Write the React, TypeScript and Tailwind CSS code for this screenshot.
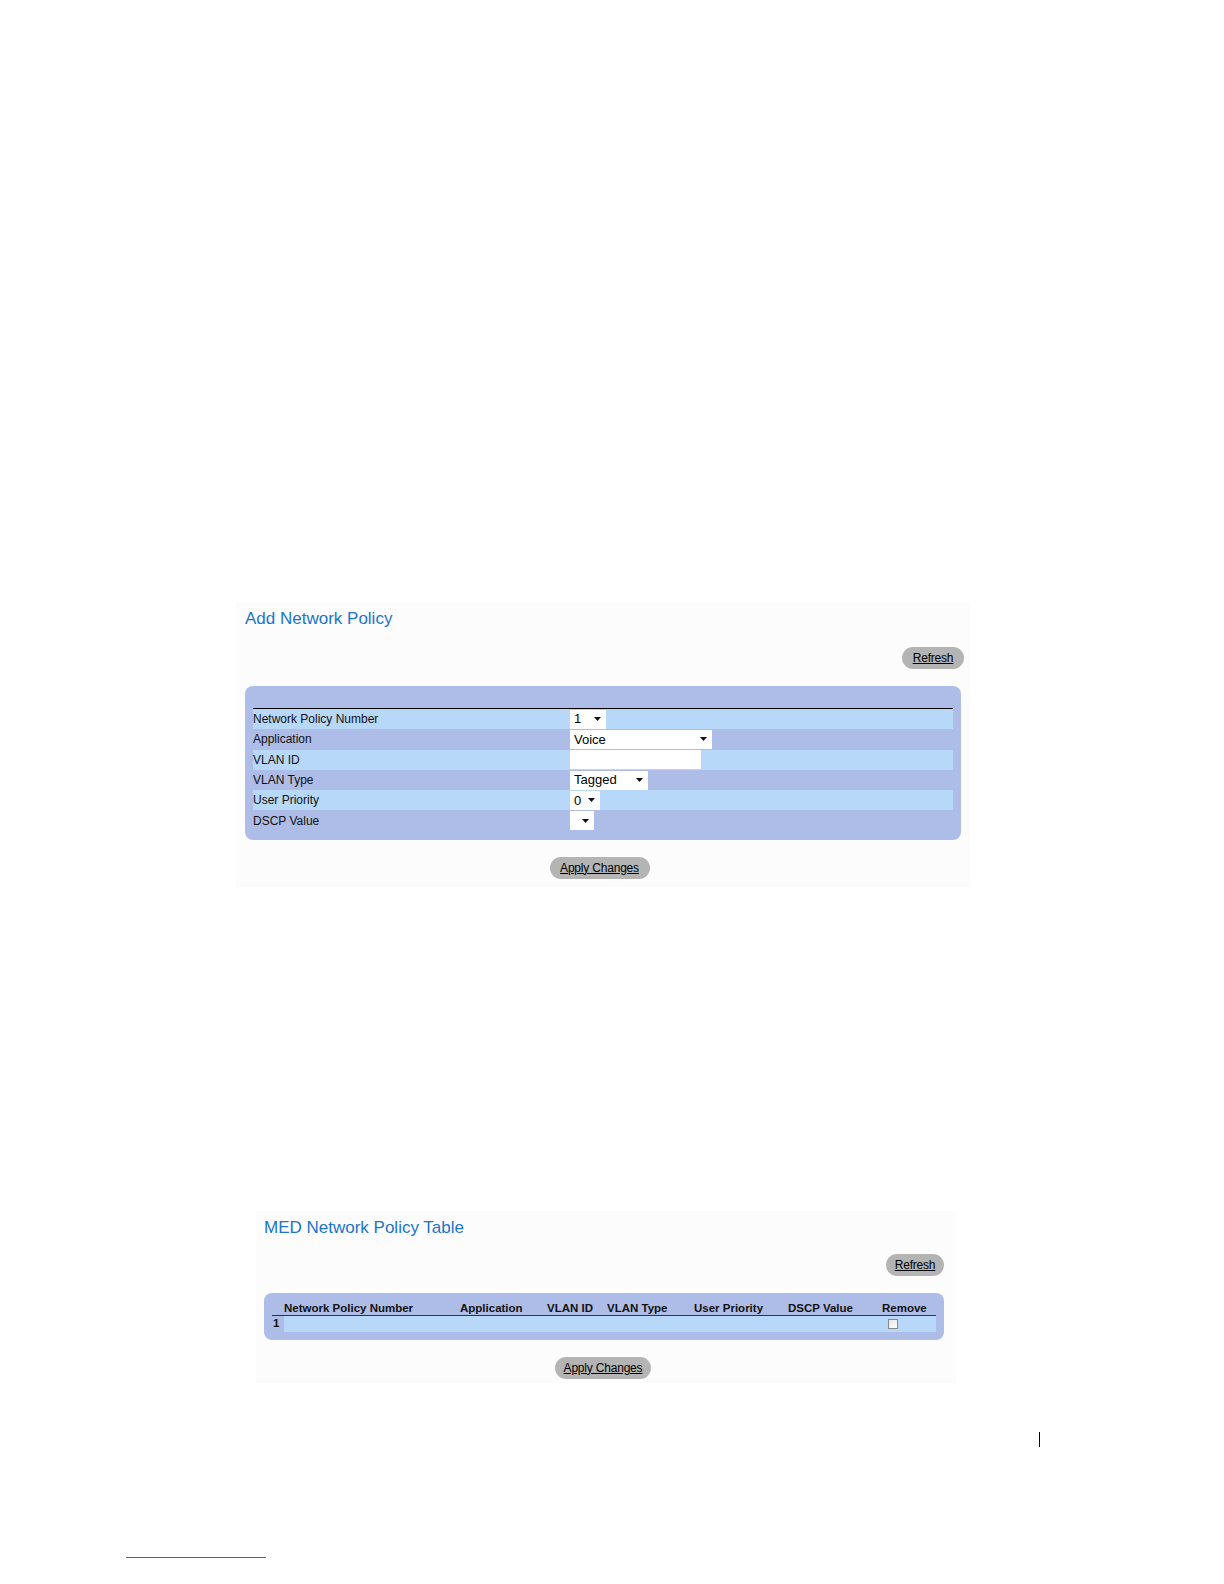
import React from "react";

const font = { fontFamily: '"Liberation Sans", Arial, sans-serif' };

function PillButton({ label, className = "" }: { label: string; className?: string }) {
  return (
    <button
      type="button"
      className={`flex h-[22px] items-center justify-center whitespace-nowrap rounded-full bg-[#b4b4b4] text-[12px] tracking-[-0.2px] text-black underline ${className}`}
    >
      {label}
    </button>
  );
}

function Caret() {
  return (
    <svg width="7" height="4" viewBox="0 0 7 4" className="shrink-0">
      <path d="M0 0h7L3.5 4z" fill="#111" />
    </svg>
  );
}

function FakeSelect({ value, width }: { value: string; width: string }) {
  return (
    <div className={`flex h-[19px] items-center justify-between bg-white pl-[4px] pr-[5px] text-[13px] text-black ${width}`}>
      <span>{value}</span>
      <Caret />
    </div>
  );
}

const formRows: { label: string; control: React.ReactNode; light: boolean }[] = [
  { label: "Network Policy Number", control: <FakeSelect value="1" width="w-[36px]" />, light: true },
  { label: "Application", control: <FakeSelect value="Voice" width="w-[142px]" />, light: false },
  { label: "VLAN ID", control: <div className="h-[19px] w-[131px] bg-white" />, light: true },
  { label: "VLAN Type", control: <FakeSelect value="Tagged" width="w-[78px]" />, light: false },
  { label: "User Priority", control: <FakeSelect value="0" width="w-[30px]" />, light: true },
  { label: "DSCP Value", control: <FakeSelect value="" width="w-[24px]" />, light: false },
];

const tableCols = [
  { label: "Network Policy Number", w: "w-[176px]" },
  { label: "Application", w: "w-[87px]" },
  { label: "VLAN ID", w: "w-[60px]" },
  { label: "VLAN Type", w: "w-[87px]" },
  { label: "User Priority", w: "w-[94px]" },
  { label: "DSCP Value", w: "w-[94px]" },
  { label: "Remove", w: "flex-1" },
];

export default function App() {
  return (
    <div className="relative h-[1584px] w-[1224px] bg-white" style={font}>
      <div className="pt-[602px]">
        {/* Add Network Policy */}
        <section className="ml-[236px] w-[734px] bg-[#fcfcfc] pb-[8px] pl-[9px] pr-[6px]">
          <h1 className="pt-[6px] text-[17px] leading-[22px] text-[#1c74cc]">Add Network Policy</h1>
          <div className="mt-[17px] flex justify-end">
            <PillButton label="Refresh" className="w-[62px]" />
          </div>
          <div className="mt-[17px] w-[716px] rounded-[8px] bg-[#aebde8] px-[8px] pb-[9px] pt-[22px]">
            <div className="border-t border-black">
              {formRows.map((r) => (
                <div
                  key={r.label}
                  className={`flex h-[20.3px] items-center text-[12px] text-[#111] ${r.light ? "bg-[#b8d8fa]" : ""}`}
                >
                  <div className="w-[317px]">{r.label}</div>
                  {r.control}
                </div>
              ))}
            </div>
          </div>
          <div className="mt-[17px] flex justify-center pr-[10px]">
            <PillButton label="Apply Changes" className="w-[100px]" />
          </div>
        </section>

        {/* MED Network Policy Table */}
        <section className="ml-[256px] mt-[324px] w-[700px] bg-[#fcfcfc] pb-[4px] pl-[8px] pr-[10px]">
          <h2 className="pt-[6px] text-[17px] leading-[22px] text-[#1c74cc]">MED Network Policy Table</h2>
          <div className="mt-[15px] flex justify-end pr-[2px]">
            <PillButton label="Refresh" className="w-[58px]" />
          </div>
          <div className="mt-[17px] w-[680px] rounded-[8px] bg-[#aebde8] px-[8px] pb-[8px] pt-[8px]">
            <div className="flex border-b border-[#333] pl-[12px] text-[11.5px] font-bold leading-[14px] text-[#111]">
              {tableCols.map((c) => (
                <div key={c.label} className={c.w}>
                  {c.label}
                </div>
              ))}
            </div>
            <div className="flex h-[16px] items-center text-[11.5px] font-bold text-[#111]">
              <div className="w-[12px] pl-[1px]">1</div>
              <div className="flex h-full flex-1 items-center justify-end bg-[#b8d8fa] pr-[38px]">
                <div className="h-[10px] w-[10px] border border-[#888] bg-gradient-to-br from-[#e6e6e6] to-white" />
              </div>
            </div>
          </div>
          <div className="mt-[17px] flex justify-center pr-[4px]">
            <PillButton label="Apply Changes" className="w-[96px]" />
          </div>
        </section>
      </div>

      {/* page marker */}
      <div className="absolute left-[1039px] top-[1432px] h-[15px] w-[1px] bg-black" />
      <div className="absolute left-[126px] top-[1557px] h-[1px] w-[140px] bg-[#3a5fcd]" />
    </div>
  );
}
